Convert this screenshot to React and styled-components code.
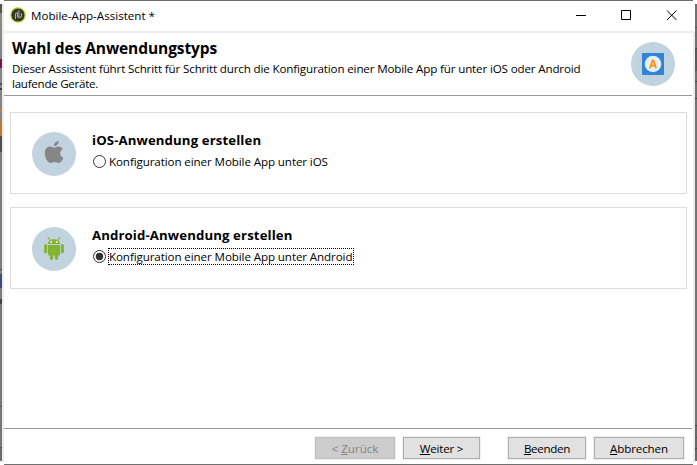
import React from 'react';
import styled, { createGlobalStyle } from 'styled-components';

const GlobalStyle = createGlobalStyle`
  *, *::before, *::after { box-sizing: border-box; }
  body { margin: 0; background: #fff; overflow: hidden; }
  svg { display: block; flex: none; }
`;

const Desktop = styled.div`
  display: grid;
  grid-template-columns: 2px 2px 689px 2px 2px;
  width: 697px;
  height: 465px;
  background: #fff;
  color: #000;
  font: 11.6px/15px "Open Sans", "Noto Sans", sans-serif;
`;

const LeftBackdrop = styled.div`
  margin: 4px 0;
  background: linear-gradient(
    #55554a 0 9px, #8b8b80 9px 36px, #858585 36px 55px, #701a42 55px 64px,
    #858585 64px 79px, #4e4e4e 79px 81px, #8a8a8a 81px 84px, #444 84px 86px,
    #858585 86px 105px, #b98546 105px 108px, #858585 108px 117px,
    #b97a35 117px 132px, #505050 132px 148px, #7d7d7d 148px 265px,
    #4c4c4c 265px 266px, #7d7d7d 266px 270px, #3d4c70 270px 284px,
    #7d7d7d 284px 295px, #444 295px 300px, #777 300px 402px,
    #555 402px 403px, #777 403px 443px, #555 443px 444px, #6b6b6b 444px
  );
`;

const RightBackdrop = styled.div`
  margin: 4px 0;
  background: linear-gradient(
    #707070 0 23px, #555 23px 24px, #707070 24px 44px, #444 44px 45px,
    #5b5b5b 45px 67px, #707070 67px 77px, #444 77px 78px, #707070 78px 94px,
    #444 94px 95px, #737373 95px 421px, #444 421px 422px, #686868 422px 433px,
    #555 433px 434px, #686868 434px 444px, #444 444px 445px, #686868 445px
  );
`;

const Edge = styled.div`
  margin: ${(p) => p.$top}px 0 2px;
  background: #ededed;
`;

const Window = styled.div`
  display: flex;
  flex-direction: column;
  border-top: 1px solid #707070;
  border-bottom: 1px solid #707070;
`;

const TitleBar = styled.header`
  display: flex;
  align-items: flex-start;
  height: 32px;
  padding-left: 6px;
  border-bottom: 2px solid #eeeeee;
`;

const AppBadge = styled.svg`
  margin-top: 6px;
`;

const WindowTitle = styled.div`
  flex: 1;
  margin: 7px 0 0 5px;
  letter-spacing: 0;
`;

const WindowControls = styled.svg`
  margin-right: 9px;
`;

const Body = styled.main`
  display: flex;
  flex-direction: column;
  flex: 1;
  width: 688px;
`;

const Intro = styled.section`
  display: flex;
  justify-content: space-between;
  height: 63px;
  padding: 4px 17px 0 8px;
  border-bottom: 1px solid #999;
`;

const Heading = styled.h1`
  margin: 0 0 2px;
  font-size: 15.5px;
  line-height: 22px;
  letter-spacing: -0.09px;
`;

const Line = styled.p`
  margin: 0;
  white-space: nowrap;
  letter-spacing: ${(p) => p.$spacing}px;
`;

const IntroIcon = styled.svg`
  margin-top: 5px;
`;

const Options = styled.section`
  display: flex;
  flex-direction: column;
  gap: 13px;
  flex: 1;
  padding: 16px 5px 0 6px;
`;

const OptionCard = styled.article`
  display: flex;
  gap: 16px;
  height: 82px;
  padding: 19px 21px;
  border: 1px solid #dcdcdc;
`;

const OptionTitle = styled.h2`
  margin: -1px 0 4px;
  font-size: 13.2px;
  line-height: 18px;
  letter-spacing: 0.12px;
`;

const RadioRow = styled.label`
  display: flex;
  align-items: center;
  height: 17px;
  letter-spacing: -0.1px;
`;

const RadioText = styled.span`
  height: 17px;
  margin-left: 1px;
  padding-right: 1px;
  border: 1px dotted ${(p) => (p.$focused ? '#000' : 'transparent')};
  white-space: nowrap;
`;

const Footer = styled.footer`
  display: flex;
  justify-content: flex-end;
  height: 36px;
  padding: 8px 8px 0 0;
  border-top: 1px solid #999;
`;

const Button = styled.button`
  width: ${(p) => p.$width}px;
  height: 22px;
  margin: 0 0 0 ${(p) => p.$gap}px;
  padding: 0;
  border: 1px solid #adadad;
  background: #e1e1e1;
  color: #000;
  font: inherit;
  letter-spacing: ${(p) => p.$spacing}px;
  box-shadow: 0 0 0 1px #f0f0f0;

  &:disabled {
    border-color: #bfbfbf;
    background: #cccccc;
    color: #838383;
  }
`;

const Mnemonic = styled.span`
  text-decoration: underline;
  text-decoration-thickness: 1px;
  text-underline-offset: 1px;
`;

function Radio({ checked }) {
  return (
    <svg width="15" height="15" viewBox="0 0 15 15">
      <circle cx="7.5" cy="7.5" r="6" fill="#fff" stroke="#333" />
      {checked && <circle cx="7.5" cy="7.5" r="3.7" fill="#333" />}
    </svg>
  );
}

function AppleIcon() {
  return (
    <svg width="44" height="44" viewBox="0 0 44 44">
      <circle cx="22" cy="22" r="22" fill="#c1d3df" />
      <g fill="#868686">
        <path d="M21.9 14.1C21.6 11.6 24 9.2 26.6 9c.4 2.6-2 5.1-4.7 5.1Z" />
        <path d="M22.2 15.8c1 0 2.2-1.2 4.2-1.2 1.6 0 3.4.8 4.4 2.3-3.8 2.3-3.3 7.4.6 8.8-.8 2.1-2.7 5.3-4.9 5.3-1.5 0-2-.9-4-.9s-2.5.9-4 .9c-2.8 0-5.7-5.5-5.7-9.8 0-4.4 2.5-6.6 5.4-6.6 1.8 0 3 1.2 4 1.2Z" />
      </g>
    </svg>
  );
}

function AndroidIcon() {
  return (
    <svg width="44" height="44" viewBox="0 0 44 44">
      <circle cx="22" cy="22" r="22" fill="#c1d3df" />
      <g fill="#83b532">
        <path d="M16 17c0-2.7 2.4-4.7 6-4.7s6 2 6 4.7Z" />
        <path d="M16 18h12v9.2c0 .8-.5 1.3-1.3 1.3h-9.4c-.8 0-1.3-.5-1.3-1.3Z" />
        <rect x="12.1" y="17.2" width="3.1" height="9" rx="1.2" />
        <rect x="28.8" y="17.2" width="3.1" height="9" rx="1.2" />
        <rect x="18" y="25" width="3.2" height="7.8" rx="1.2" />
        <rect x="22.9" y="25" width="3.2" height="7.8" rx="1.2" />
      </g>
      <path d="m15.7 10.2 3 3.3M28.3 10.2l-3 3.3" stroke="#83b532" strokeWidth="1.1" />
      <circle cx="19.2" cy="15" r=".9" fill="#fff" />
      <circle cx="24.8" cy="15" r=".9" fill="#fff" />
    </svg>
  );
}

function Option({ icon, title, label, checked }) {
  return (
    <OptionCard>
      {icon}
      <div>
        <OptionTitle>{title}</OptionTitle>
        <RadioRow>
          <Radio checked={checked} />
          <RadioText $focused={checked}>{label}</RadioText>
        </RadioRow>
      </div>
    </OptionCard>
  );
}

export default function App() {
  return (
    <>
      <GlobalStyle />
      <Desktop>
        <LeftBackdrop />
        <Edge $top={4} />
        <Window>
          <TitleBar>
            <AppBadge width="16" height="16" viewBox="0 0 16 16">
              <circle cx="8" cy="8" r="7.1" fill="#35372a" stroke="#b5d21b" strokeWidth="1.1" />
              <path d="M8.9 11.2V3.2M5.5 12V7a1.2 1.2 0 0 1 1.2-1.2h.8v4.4M8.9 10.4h1.1a1.5 1.5 0 0 0 1.5-1.5V6.2" fill="none" stroke="#b0b2a4" strokeWidth="1" />
            </AppBadge>
            <WindowTitle>Mobile-App-Assistent *</WindowTitle>
            <WindowControls width="110" height="30" viewBox="0 0 110 30" fill="none" stroke="#000">
              <path d="M2 14.5h10M47.5 9.5h9v9h-9zM93 9.5l9.5 9.5M102.5 9.5 93 19" />
            </WindowControls>
          </TitleBar>
          <Body>
            <Intro>
              <div>
                <Heading>Wahl des Anwendungstyps</Heading>
                <Line $spacing={-0.145}>
                  Dieser Assistent führt Schritt für Schritt durch die Konfiguration einer Mobile App für unter iOS oder Android
                </Line>
                <Line $spacing={-0.27}>laufende Geräte.</Line>
              </div>
              <IntroIcon width="44" height="44" viewBox="0 0 44 44">
                <circle cx="22" cy="22" r="22" fill="#c1d3df" />
                <rect x="11" y="11" width="22" height="22" rx=".7" fill="#2f84d3" />
                <circle cx="22" cy="22" r="8.3" fill="#e5edf5" />
                <path d="M18.9 26.2 21.6 18.4h.8l2.7 7.8M20 23.6h4" fill="none" stroke="#f6930a" strokeWidth="1.7" strokeLinejoin="bevel" />
              </IntroIcon>
            </Intro>
            <Options>
              <Option
                icon={<AppleIcon />}
                title="iOS-Anwendung erstellen"
                label="Konfiguration einer Mobile App unter iOS"
              />
              <Option
                icon={<AndroidIcon />}
                title="Android-Anwendung erstellen"
                label="Konfiguration einer Mobile App unter Android"
                checked
              />
            </Options>
            <Footer>
              <Button disabled $width={80} $gap={0} $spacing={0}>&lt; <Mnemonic>Z</Mnemonic>urück</Button>
              <Button $width={77} $gap={8} $spacing={-0.22}><Mnemonic>W</Mnemonic>eiter &gt;</Button>
              <Button $width={78} $gap={28} $spacing={-0.3}><Mnemonic>B</Mnemonic>eenden</Button>
              <Button $width={90} $gap={8} $spacing={-0.12}><Mnemonic>A</Mnemonic>bbrechen</Button>
            </Footer>
          </Body>
        </Window>
        <Edge $top={31} />
        <RightBackdrop />
      </Desktop>
    </>
  );
}
